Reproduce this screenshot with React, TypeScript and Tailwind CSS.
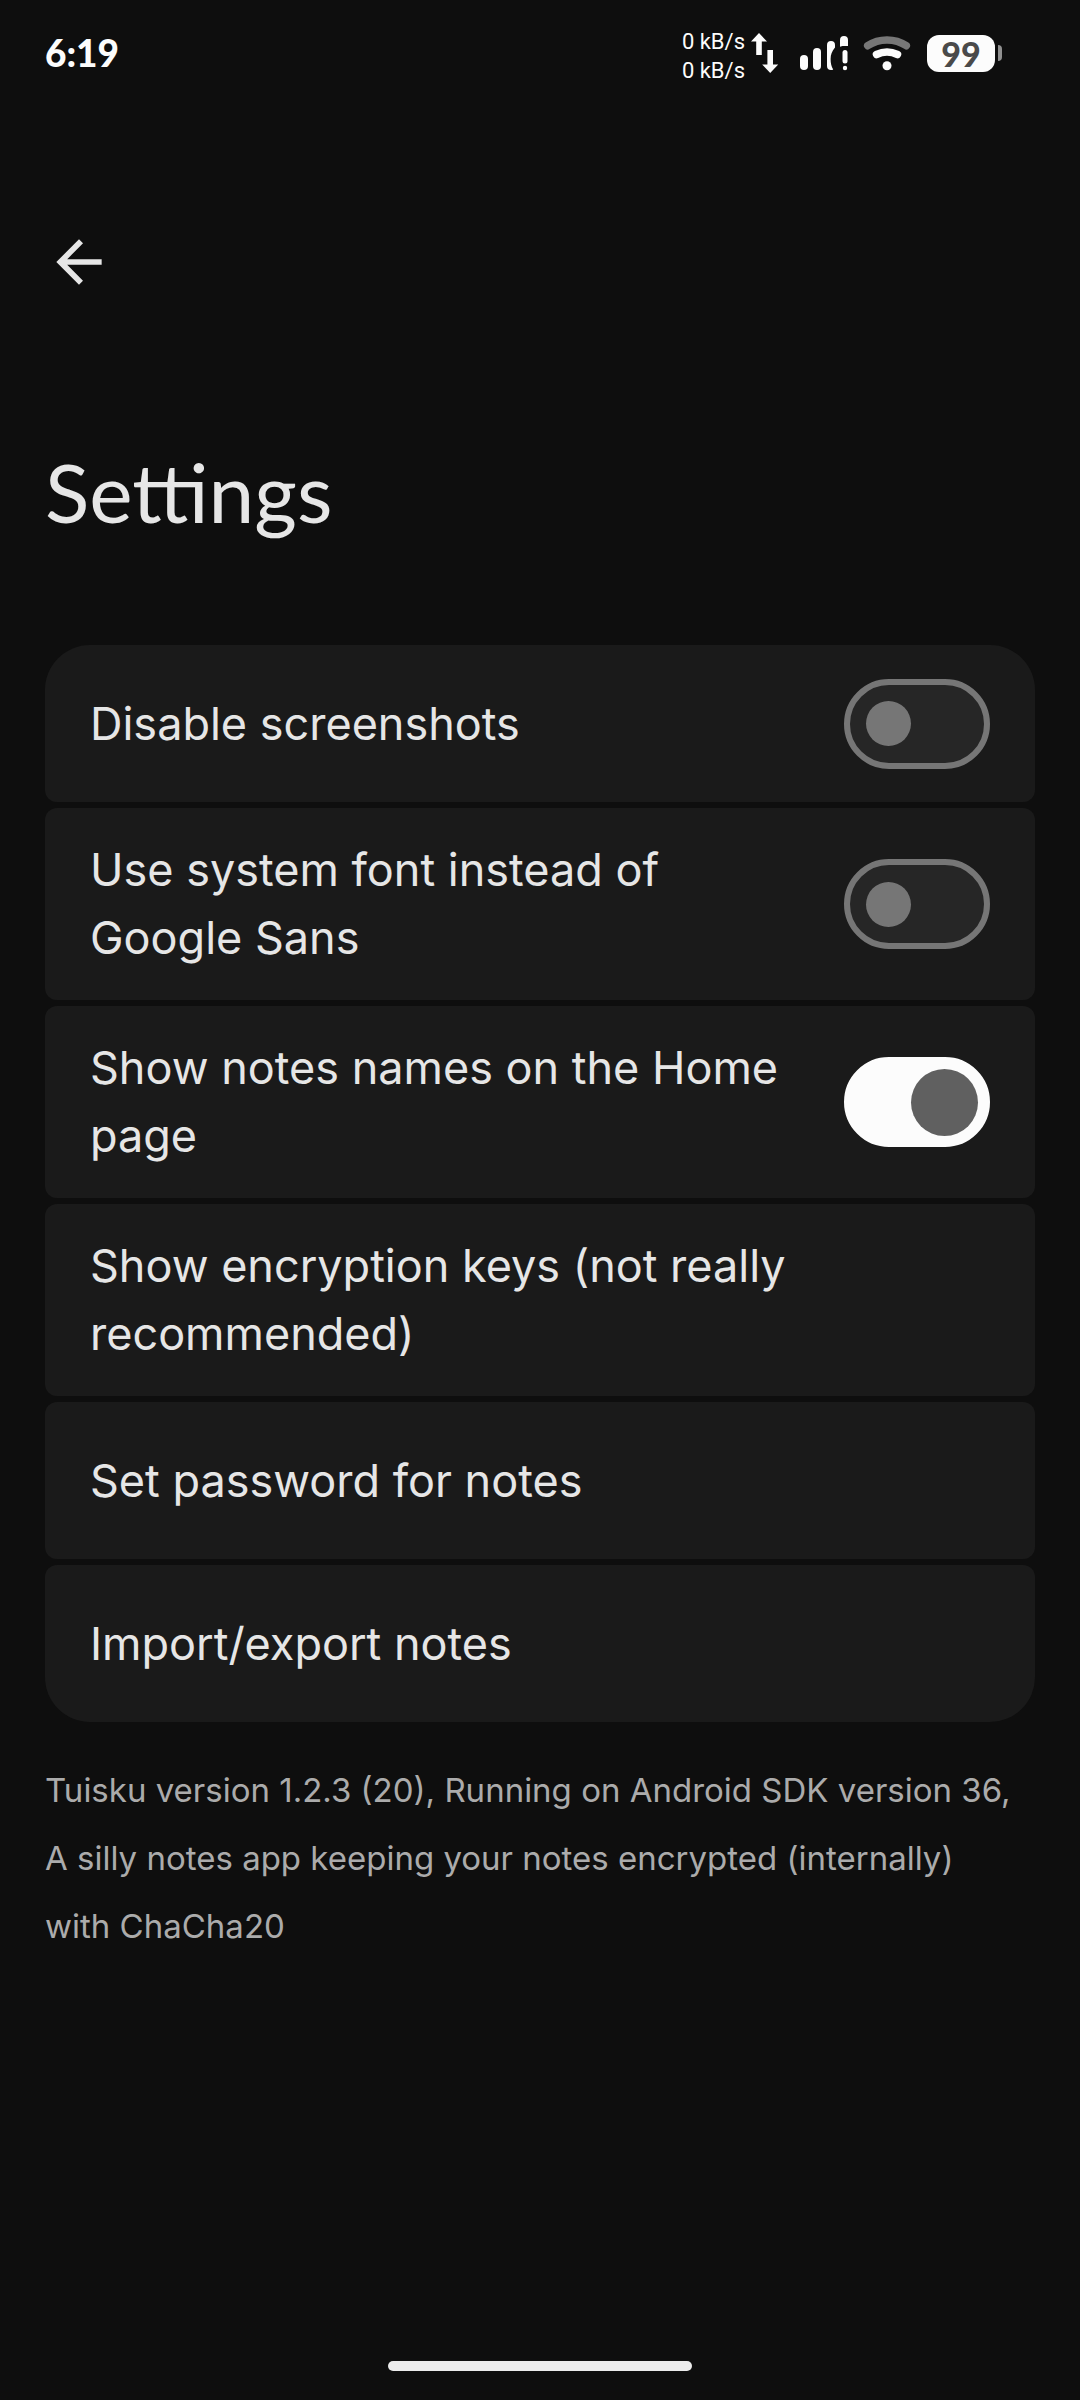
import { MdArrowBack } from "react-icons/md";

type Setting = {
	id: string;
	label: string;
	toggle?: boolean;
	enabled?: boolean;
};

const settings: Setting[] = [
	{ id: "screenshots", label: "Disable screenshots", toggle: true },
	{
		id: "system-font",
		label: "Use system font instead of Google Sans",
		toggle: true,
	},
	{
		id: "note-names",
		label: "Show notes names on the Home page",
		toggle: true,
		enabled: true,
	},
	{
		id: "encryption-keys",
		label: "Show encryption keys (not really recommended)",
	},
	{ id: "password", label: "Set password for notes" },
	{ id: "import-export", label: "Import/export notes" },
];

const TrafficIcon = () => (
	<svg width="28" height="40" viewBox="0 0 28 40" fill="#fcfcfc" aria-hidden="true">
		<path d="M8 0l8 8.500h-5.200V22H5.200V8.500H0z" />
		<path d="M19.200 40l-8-8.500h5.200V17h5.600v14.500h5.200z" />
	</svg>
);

const SignalIcon = () => (
	<svg width="50" height="36" viewBox="0 0 50 36" fill="#fcfcfc" aria-hidden="true">
		<rect x="1" y="20" width="8" height="15" rx="4" />
		<rect x="14" y="13" width="8" height="22" rx="4" />
		<path d="M28 10a4 4 0 0 1 8 0v2.500C33 16 31.600 19.500 31.600 24c0 4 .8 7.500 2.600 10.500-.6.400-1.400.5-2.200.5a4 4 0 0 1-4-4z" />
		<path d="M41 5a4 4 0 0 1 8 0v6h-5.500l-2.500.8z" />
		<rect x="43.500" y="15" width="5" height="13.500" rx="2.500" />
		<circle cx="46" cy="33" r="2.200" />
	</svg>
);

const WifiIcon = () => (
	<svg width="48" height="36" viewBox="0 0 48 36" fill="none" strokeLinecap="round" aria-hidden="true">
		<path d="M4.700 10.700C16 3 32 3 43.300 10.700" stroke="#777777" strokeWidth="7.500" />
		<path d="M13.500 19.500C20 16.500 28 16.500 34.500 19.500" stroke="#fcfcfc" strokeWidth="7.500" />
		<circle cx="24" cy="30.700" r="4.500" fill="#fcfcfc" />
	</svg>
);

const StatusBar = () => (
	<div className="flex h-[106px] items-center justify-between pr-[33px] font-['Lato',sans-serif] text-[#fcfcfc]">
		<time className="text-[37px] font-black">6:19</time>
		<div className="flex items-center">
			<div className="mr-1.5 pt-1.5 font-['Roboto',sans-serif] text-[22px] leading-[29px]">
				<p>0 kB/s</p>
				<p>0 kB/s</p>
			</div>
			<TrafficIcon />
			<div className="ml-5 flex items-center gap-3.5">
				<SignalIcon />
				<WifiIcon />
				<div className="ml-0.5 flex items-center gap-[3px]">
					<div className="flex h-[37px] w-[68px] items-center justify-center rounded-xl bg-[#fcfcfc] text-[34px] leading-[37px] font-black text-[#4a4a4a]">
						99
					</div>
					<div className="h-4 w-1 rounded-r-sm bg-[#909090]" />
				</div>
			</div>
		</div>
	</div>
);

const rowClass =
	"flex min-h-[157px] w-full items-center justify-between gap-6 rounded-xl bg-[#1a1a1a] px-[45px] py-7 text-left text-[45px] leading-[68px] group-first:rounded-t-[45px] group-last:rounded-b-[45px]";

const SettingRow = ({ id, label, toggle, enabled }: Setting) => (
	<li className="group">
		{toggle ? (
			<label htmlFor={id} className={rowClass}>
				<span>{label}</span>
				<input
					id={id}
					type="checkbox"
					role="switch"
					defaultChecked={enabled}
					className="flex h-[90px] w-[146px] shrink-0 appearance-none items-center rounded-full border-[6px] border-[#767676] bg-[#262626] px-4 before:size-[45px] before:rounded-full before:bg-[#767676] checked:justify-end checked:border-[#fcfcfc] checked:bg-[#fcfcfc] checked:px-1.5 checked:before:size-[67px] checked:before:bg-[#606060]"
				/>
			</label>
		) : (
			<button type="button" className={rowClass}>
				{label}
			</button>
		)}
	</li>
);

const App = () => {
	return (
		<div className="flex min-h-screen flex-col bg-[#0e0e0e] px-[45px] font-['Inter',sans-serif] text-[#e6e6e6]">
			<StatusBar />
			<header className="pt-[122px]">
				<button type="button" aria-label="Back" className="block">
					<MdArrowBack className="size-[68px]" />
				</button>
				<h1 className="mt-[145px] font-['Lato',sans-serif] text-[82px] leading-[100px]">
					Settings
				</h1>
			</header>
			<main className="mt-[104px]">
				<ul className="flex flex-col gap-1.5">
					{settings.map((setting) => (
						<SettingRow key={setting.id} {...setting} />
					))}
				</ul>
				<p className="mt-[34px] text-[33px] leading-[68px] text-[#ababab]">
					Tuisku version 1.2.3 (20), Running on Android SDK version 36,
					<br />A silly notes app keeping your notes encrypted (internally)
					<br />
					with ChaCha20
				</p>
			</main>
			<div className="mx-auto mt-auto mb-[29px] h-2.5 w-[304px] rounded-full bg-[#ececec]" />
		</div>
	);
};
export default App;
